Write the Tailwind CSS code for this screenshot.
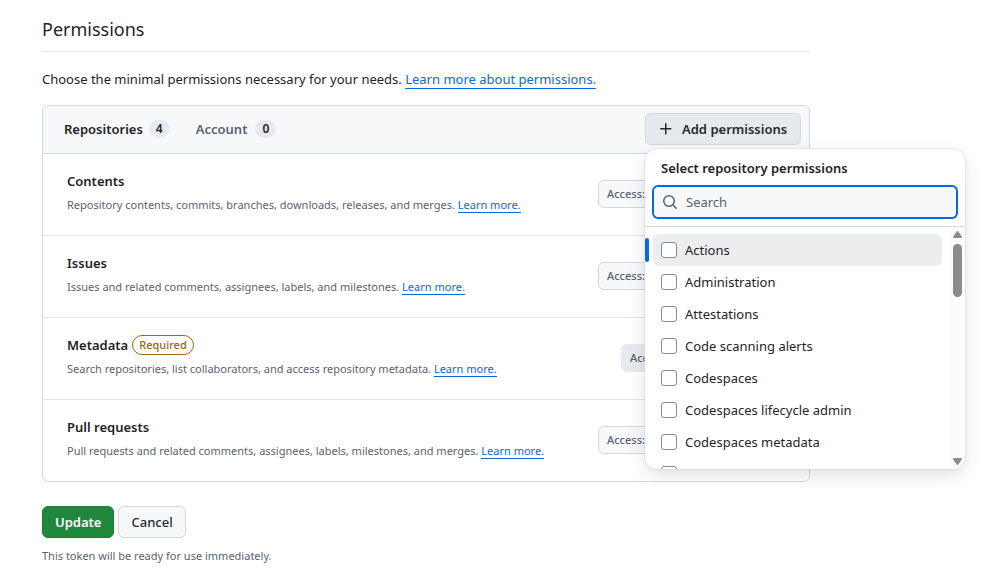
<!DOCTYPE html>
<html lang="en">
<head>
<meta charset="utf-8">
<meta name="viewport" content="width=device-width, initial-scale=1">
<title>Permissions</title>
<script src="https://cdn.jsdelivr.net/npm/@tailwindcss/browser@4"></script>
</head>
<body class="bg-white font-['Noto_Sans','Open_Sans',sans-serif] text-[13px] leading-5 text-[#1f2328]">
<main class="ml-[42px] max-w-3xl pt-3.5">
  <h1 class="border-b border-[#d1d9e0]/70 pb-[7px] text-lg leading-[30px]">Permissions</h1>
  <p class="mt-[17px]">Choose the minimal permissions necessary for your needs. <a href="#" class="border-b border-[#0969da] text-[#0969da]">Learn more about permissions.</a></p>

  <section class="mt-4 rounded-md border border-[#d1d9e0]">
    <header class="flex items-center justify-between rounded-t-md border-b border-[#d1d9e0] bg-[#f6f8fa] pt-[7px] pr-2 pb-2 pl-[21px]">
      <nav class="flex gap-[26px] font-semibold">
        <button class="flex items-center gap-1.5">Repositories <span class="rounded-full bg-[#e6eaef] px-[7px] text-xs leading-[18px]">4</span></button>
        <button class="flex items-center gap-2 text-[#59636e]">Account <span class="rounded-full bg-[#e6eaef] px-[7px] text-xs leading-[18px] text-[#1f2328]">0</span></button>
      </nav>
      <div class="relative">
        <button class="flex h-8 w-[156px] items-center gap-2 rounded-md border border-[#d1d9e0] bg-[#e6eaef] pl-3 font-semibold whitespace-nowrap text-[#25292e]">
          <svg class="size-4" viewBox="0 0 16 16" fill="currentColor" aria-hidden="true"><path d="M7.75 2a.75.75 0 0 1 .75.75V7h4.25a.75.75 0 0 1 0 1.500H8.500v4.250a.75.75 0 0 1-1.500 0V8.500H2.750a.75.75 0 0 1 0-1.500H7V2.750A.75.75 0 0 1 7.750 2Z"/></svg>
          Add permissions
        </button>
        <div role="dialog" aria-labelledby="picker-title" class="absolute top-full left-0 z-10 mt-1 flex h-80 w-80 flex-col overflow-hidden rounded-xl bg-white shadow-[0_0_0_1px_#d1d9e080,0_6px_12px_-3px_#25292e0a,0_6px_18px_0_#25292e1f]">
          <div class="border-b border-[#d1d9e0] px-2 pt-[9px] pb-2">
            <h2 id="picker-title" class="px-2 font-semibold">Select repository permissions</h2>
            <label class="mt-2 flex h-8 items-center gap-2 rounded-[5px] border border-[#0969da] bg-[#f6f8fa] pl-2 text-[#59636e] ring-1 ring-[#0969da]">
              <svg class="size-4 shrink-0" viewBox="0 0 16 16" fill="currentColor" aria-hidden="true"><path d="M10.680 11.740a6 6 0 0 1-7.922-8.982 6 6 0 0 1 8.982 7.922l3.040 3.040a.749.749 0 0 1-.326 1.275.749.749 0 0 1-.734-.215ZM11.500 7a4.499 4.499 0 1 0-8.997 0A4.499 4.499 0 0 0 11.500 7Z"/></svg>
              <input type="text" aria-label="Search" placeholder="Search" class="min-w-0 flex-1 outline-none placeholder:text-[#59636e]">
            </label>
          </div>
          <div class="flex min-h-0 flex-1">
            <div class="min-w-0 flex-1 overflow-hidden py-[7px]">
              <div class="flex h-8 items-center">
                <span class="h-6 w-1 rounded-md bg-[#0969da]"></span>
                <label class="mr-2 ml-1 flex h-8 flex-1 items-center gap-2 rounded-md bg-[#ecedef] pl-2"><input type="checkbox" class="size-4 appearance-none rounded-[3px] border border-[#818b98] bg-white">Actions</label>
              </div>
              <label class="flex h-8 items-center gap-2 pl-4"><input type="checkbox" class="size-4 appearance-none rounded-[3px] border border-[#818b98] bg-white">Administration</label>
              <label class="flex h-8 items-center gap-2 pl-4"><input type="checkbox" class="size-4 appearance-none rounded-[3px] border border-[#818b98] bg-white">Attestations</label>
              <label class="flex h-8 items-center gap-2 pl-4"><input type="checkbox" class="size-4 appearance-none rounded-[3px] border border-[#818b98] bg-white">Code scanning alerts</label>
              <label class="flex h-8 items-center gap-2 pl-4"><input type="checkbox" class="size-4 appearance-none rounded-[3px] border border-[#818b98] bg-white">Codespaces</label>
              <label class="flex h-8 items-center gap-2 pl-4"><input type="checkbox" class="size-4 appearance-none rounded-[3px] border border-[#818b98] bg-white">Codespaces lifecycle admin</label>
              <label class="flex h-8 items-center gap-2 pl-4"><input type="checkbox" class="size-4 appearance-none rounded-[3px] border border-[#818b98] bg-white">Codespaces metadata</label>
              <div class="flex h-8 items-center pl-4"><input type="checkbox" aria-label="More permissions" class="size-4 appearance-none rounded-[3px] border border-[#818b98] bg-white"></div>
            </div>
            <div class="flex w-[15px] flex-col items-center bg-[#fcfcfc] pt-1 pb-1 text-[#8b8b8b]" aria-hidden="true">
              <svg class="h-[7px] w-[9px]" viewBox="0 0 9 7" fill="currentColor"><path d="M3.700.6Q4.500-.4 5.300.6L8.800 5.500Q9.200 7 8 7H1Q-.2 7 .2 5.500Z"/></svg>
              <span class="mt-[6px] h-[53px] w-[9px] rounded-full bg-[#8b8b8b]"></span>
              <svg class="mt-auto h-[7px] w-[9px] rotate-180" viewBox="0 0 9 7" fill="currentColor"><path d="M3.700.6Q4.500-.4 5.300.6L8.800 5.500Q9.200 7 8 7H1Q-.2 7 .2 5.500Z"/></svg>
            </div>
          </div>
        </div>
      </div>
    </header>

    <ul class="divide-y divide-[#d1d9e0]/70">
      <li class="flex items-start justify-between pr-4 pl-6">
        <div class="pt-[17px] pb-5">
          <h3 class="font-semibold">Contents</h3>
          <p class="mt-1 text-[11px] text-[#59636e]">Repository contents, commits, branches, downloads, releases, and merges. <a href="#" class="border-b border-[#0969da] text-[#0969da]">Learn more.</a></p>
        </div>
        <button class="mt-[26px] h-7 w-[195px] rounded-md border border-[#d1d9e0] bg-[#f6f8fa] pl-2 text-left text-[11px] font-medium text-[#59636e]">Access:</button>
      </li>
      <li class="flex items-start justify-between pr-4 pl-6">
        <div class="pt-[17px] pb-5">
          <h3 class="font-semibold">Issues</h3>
          <p class="mt-1 text-[11px] text-[#59636e]">Issues and related comments, assignees, labels, and milestones. <a href="#" class="border-b border-[#0969da] text-[#0969da]">Learn more.</a></p>
        </div>
        <button class="mt-[26px] h-7 w-[195px] rounded-md border border-[#d1d9e0] bg-[#f6f8fa] pl-2 text-left text-[11px] font-medium text-[#59636e]">Access:</button>
      </li>
      <li class="flex items-start justify-between pr-4 pl-6">
        <div class="pt-[17px] pb-5">
          <h3 class="flex items-center gap-1 font-semibold">Metadata <span class="flex h-5 items-center rounded-full border border-[#9a6700] px-1.5 text-[11px] font-medium text-[#9a6700]">Required</span></h3>
          <p class="mt-1 text-[11px] text-[#59636e]">Search repositories, list collaborators, and access repository metadata. <a href="#" class="border-b border-[#0969da] text-[#0969da]">Learn more.</a></p>
        </div>
        <button class="mt-[26px] h-7 w-[172px] rounded-md bg-[#e6eaef] pl-[9px] text-left text-[11px] font-medium text-[#59636e]">Access:</button>
      </li>
      <li class="flex items-start justify-between pr-4 pl-6">
        <div class="pt-[17px] pb-5">
          <h3 class="font-semibold">Pull requests</h3>
          <p class="mt-1 text-[11px] text-[#59636e]">Pull requests and related comments, assignees, labels, milestones, and merges. <a href="#" class="border-b border-[#0969da] text-[#0969da]">Learn more.</a></p>
        </div>
        <button class="mt-[26px] h-7 w-[195px] rounded-md border border-[#d1d9e0] bg-[#f6f8fa] pl-2 text-left text-[11px] font-medium text-[#59636e]">Access:</button>
      </li>
    </ul>
  </section>

  <div class="mt-6 flex gap-1">
    <button class="h-8 rounded-md border border-[#1f7a37] bg-[#1f883d] px-3 font-semibold text-white shadow-xs">Update</button>
    <button class="h-8 rounded-md border border-[#d1d9e0] bg-[#f6f8fa] px-3 font-medium text-[#25292e]">Cancel</button>
  </div>
  <p class="mt-2 text-[11px] text-[#59636e]">This token will be ready for use immediately.</p>
</main>
</body>
</html>
